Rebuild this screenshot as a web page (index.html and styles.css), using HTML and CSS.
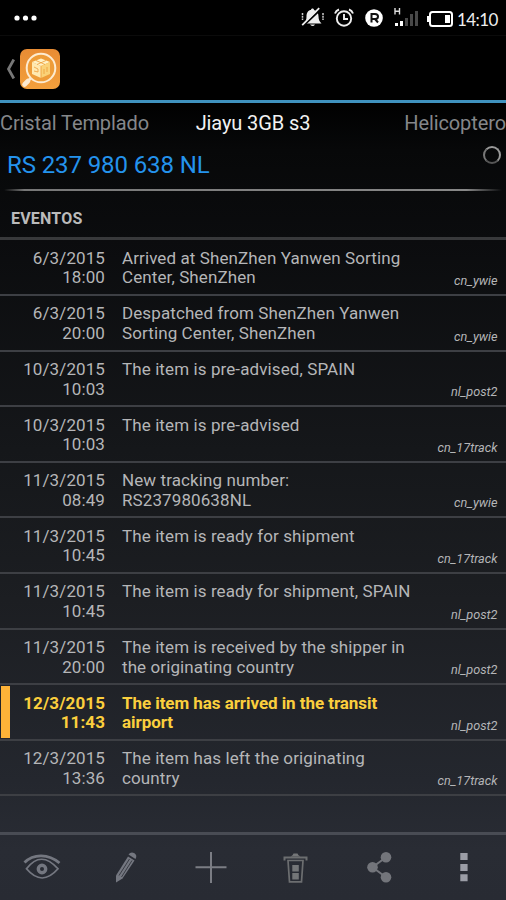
FILE: index.html
```html
<!DOCTYPE html>
<html lang="es">
<head>
<meta charset="utf-8">
<title>Eventos</title>
<link rel="stylesheet" href="styles.css">
</head>
<body>
<div class="phone">
  <header class="status">
    <svg class="dots" width="24" height="8" viewBox="0 0 24 8" fill="#fff"><circle cx="3" cy="4" r="2.600"/><circle cx="11.500" cy="4" r="2.600"/><circle cx="20" cy="4" r="2.600"/></svg>
    <div class="indicators">
      <svg width="153" height="27" viewBox="0 0 153 27">
        <g fill="#eee"><path d="M4 23.500c2-2 2.500-4 2.500-7 0-4 2-6.500 4.500-6.500 0-2 3-2 3 0 3 1 4.500 3 4.500 6.500 0 3 1 5 3 7z"/><path d="M10 24.500h5q-2 3-5 0z"/></g>
        <path d="M4 25 20 10" stroke="#000" stroke-width="2"/><path d="M3 26 20 9" stroke="#eee" stroke-width="1.800" transform="translate(-.8 -.8)"/>
        <path d="M2.500 13v7M23 13v7" fill="none" stroke="#ccc" stroke-width="1.500" stroke-dasharray="2 .7"/>
        <g fill="none" stroke="#eee" stroke-width="1.900"><circle cx="44" cy="18.500" r="7.200"/><path d="M44 14v5h4M35 13.500q1-3 4-4M49 9.500q3 1 4 4"/></g>
        <circle cx="74" cy="18" r="8.800" fill="#fff"/><path d="M71.500 22.500v-8.500h3.500q3 0 3 2.500t-3 2.500h-3.500M75 19l3 3.500" fill="none" stroke="#111" stroke-width="2"/>
        <path d="M95 8v6.500M99.500 8v6.500M95 11.200h4.500" stroke="#ddd" stroke-width="1.400"/>
        <g fill="#fff"><rect x="95" y="23" width="3" height="3"/><rect x="100" y="21" width="3" height="5"/></g>
        <g fill="#484848"><rect x="105" y="18" width="3" height="8"/><rect x="110" y="14" width="3" height="12"/><rect x="115" y="11" width="3" height="15"/></g>
        <rect x="130" y="12" width="22" height="14" rx="2.500" fill="none" stroke="#fff" stroke-width="2"/>
        <path d="M127 16h2v6h-2z" fill="#fff"/><rect x="145" y="15" width="5" height="8" fill="#fff"/>
      </svg>
      <span class="clock">14:10</span>
    </div>
  </header>
  <div class="appbar">
    <svg class="back" width="11" height="20" viewBox="0 0 11 20"><path d="M9.800.500 4.500 10l5.300 9.500" fill="none" stroke="#777" stroke-width="2.800"/></svg>
    <svg width="40" height="40" viewBox="0 0 40 40">
      <defs><linearGradient id="o" x1="0" y1="0" x2="0" y2="1"><stop offset="0" stop-color="#e88c34"/><stop offset="1" stop-color="#f3a03c"/></linearGradient></defs>
      <rect width="40" height="40" rx="7" fill="url(#o)"/>
      <circle cx="21" cy="19" r="14.300" fill="#ee9c38" stroke="#fdebd0" stroke-width="2"/>
      <path d="M10.500 29.500 8 32" stroke="#fdebd0" stroke-width="2.500"/><path d="M8 32 4.500 35.500" stroke="#fdebd0" stroke-width="4.600" stroke-linecap="round"/>
      <path d="m12 13 9-3.500 9 3.500-9 4z" fill="#fff2c5"/><path d="m12 13 9 4v12l-9-4z" fill="#ffe9b0"/><path d="m30 13-9 4v12l9-4z" fill="#fad277"/>
      <path d="M16 11.500l9 4M26 11.500l-9 4M14 18l4 2v3l-4-1M24 20v5M27 18v5M21 17v12" fill="none" stroke="#ed9c38" stroke-width=".8"/>
    </svg>
  </div>
  <nav class="tabs"><span class="prev">Cristal Templado</span><span class="cur">Jiayu 3GB s3</span><span class="next">Helicoptero</span></nav>
  <section class="number">
    <h1>RS 237 980 638 NL</h1>
    <i class="spinner"></i>
  </section>
  <h2>EVENTOS</h2>
  <main>
    <article><time>6/3/2015<br>18:00</time><p>Arrived at ShenZhen Yanwen Sorting<br>Center, ShenZhen</p><em>cn_ywie</em></article>
    <article><time>6/3/2015<br>20:00</time><p>Despatched from ShenZhen Yanwen<br>Sorting Center, ShenZhen</p><em>cn_ywie</em></article>
    <article><time>10/3/2015<br>10:03</time><p>The item is pre-advised, SPAIN</p><em>nl_post2</em></article>
    <article><time>10/3/2015<br>10:03</time><p>The item is pre-advised</p><em>cn_17track</em></article>
    <article><time>11/3/2015<br>08:49</time><p>New tracking number:<br>RS237980638NL</p><em>cn_ywie</em></article>
    <article><time>11/3/2015<br>10:45</time><p>The item is ready for shipment</p><em>cn_17track</em></article>
    <article><time>11/3/2015<br>10:45</time><p>The item is ready for shipment, SPAIN</p><em>nl_post2</em></article>
    <article><time>11/3/2015<br>20:00</time><p>The item is received by the shipper in<br>the originating country</p><em>nl_post2</em></article>
    <article class="active"><time>12/3/2015<br>11:43</time><p>The item has arrived in the transit<br>airport</p><em>nl_post2</em></article>
    <article><time>12/3/2015<br>13:36</time><p>The item has left the originating<br>country</p><em>cn_17track</em></article>
  </main>
  <footer>
    <svg viewBox="0 0 40 40"><g fill="none" stroke="#747780"><path d="M2.500 15.500C11 7 26 6 37.500 16" stroke-width="2.800"/><path d="M4.500 21.500Q19-1 36 21.500 20 43 4.500 21.500z" stroke-width="1.800" transform="translate(0 3.500) scale(1 .85)"/><circle cx="20" cy="22" r="3.700" stroke-width="3.400"/></g></svg>
    <svg viewBox="0 0 40 40"><g fill="#747780"><path d="M10 35.500V28.500L22 9.500l6.500 4-12 18z"/><path d="m22.500 7.500q2.500-3.500 6-1.200 3 2.200 1 5.700z"/></g><path d="m13 28.500 10.500-16.500M15.500 30 26 13.500" stroke="#292c34" stroke-width=".8"/></svg>
    <svg viewBox="0 0 40 40"><path d="M4.500 20.300h31M20 5v31" stroke="#7b7d84" stroke-width="2"/></svg>
    <svg viewBox="0 0 40 40"><g fill="none" stroke="#6c6e70"><path d="M9.500 13.500V10.500h22v3" stroke-width="2"/><path d="m13 13.500 1.500 21.300h12l1.500-21.300z" stroke-width="1.700"/></g><path d="M15.500 9.500q2.500-1 3-3h4q.5 2 3 3zM17.300 18h6.500v6.500h-6.500zM17.300 26h6.500v6.500h-6.500z" fill="#747678"/></svg>
    <svg viewBox="0 0 40 40"><g fill="#73757b"><circle cx="27" cy="10.200" r="5.300"/><circle cx="13.500" cy="20.200" r="5.300"/><circle cx="27" cy="30.200" r="5.300"/></g><path d="m27 10.200-13.500 10 13.500 10" fill="none" stroke="#73757b" stroke-width="2"/></svg>
    <svg viewBox="0 0 40 40"><path d="M16.300 6h7.300v7h-7.300zM16.300 17h7.300v7h-7.300zM16.300 27.300h7.300v7h-7.300z" fill="#9b9da6"/></svg>
  </footer>
</div>
</body>
</html>
```
FILE: styles.css
```css
* { box-sizing: border-box; }
body { margin: 0; background: #000; font-family: Roboto, "Liberation Sans", sans-serif; }
.phone { width: 506px; height: 900px; overflow: hidden; display: flex; flex-direction: column; color: #b5b6b8; background: linear-gradient(#000 0, #000 100px, #070809 150px, #0b0c0e 240px, #15171a 450px, #1c1e22 600px, #24272e 780px, #292c34 850px, #282b33 900px); }
svg { display: block; flex: none; }
.status { height: 36px; display: flex; justify-content: space-between; padding: 0 9px 0 14px; border-bottom: 1px solid #0b0b0b; }
.dots { margin-top: 14px; }
.indicators { display: flex; gap: 4px; }
.indicators svg { width: 153px; }
.clock { font: 17px/39px Lato, sans-serif; color: #eee; width: 40px; white-space: nowrap; letter-spacing: -.6px; }
.appbar { height: 67px; padding: 13px 0 0 4px; display: flex; gap: 5px; border-bottom: 3px solid #3f92bf; }
.back { margin-top: 10px; }
.tabs { height: 39px; display: grid; grid-template-columns: 1fr auto 1fr; font-size: 20px; line-height: 41px; letter-spacing: -.1px; color: #85878a; white-space: nowrap; }
.tabs .cur { color: #f2f2f2; }
.tabs .next { text-align: right; }
.number { height: 49px; display: flex; justify-content: space-between; padding: 0 5px 0 7px; border-bottom: 2px solid; border-image: linear-gradient(90deg, transparent 1%, #777 5%, #888 92%, transparent 99%) 1; }
h1 { margin: 0; font-size: 24px; line-height: 46px; letter-spacing: -.1px; font-weight: 400; color: #2493ed; white-space: nowrap; }
.spinner { width: 18px; height: 18px; margin-top: 4px; border-radius: 50%; border: 2px solid #999; border-left-color: #777; border-bottom-color: #555; }
h2 { margin: 0; height: 49px; flex: none; padding-left: 11px; font-size: 16px; line-height: 56px; letter-spacing: .2px; font-weight: 700; color: #bbb; border-bottom: 3px solid #38393b; }
main { padding-top: .4px; }
article { height: 55.600px; display: grid; grid-template-columns: 105px 1fr auto; column-gap: 17px; padding: 8.500px 8.500px 0 0; border-bottom: 2px solid #3d3f44; }
time, p { margin: 0; font-size: 17px; line-height: 19.500px; letter-spacing: .1px; white-space: nowrap; }
time { text-align: right; }
em { font-size: 12.700px; line-height: 16px; align-self: end; padding-bottom: 5px; }
.active { color: #fbcf3d; font-weight: 700; background: linear-gradient(#fdb338, #fdb338) 1px 1px / 9px 52px no-repeat; }
.active p { letter-spacing: -.06px; }
.active em { color: #b5b6b8; font-weight: 400; }
footer { margin-top: auto; height: 68px; flex: none; padding: 12px 0 0; border-top: 3px solid #494c54; display: grid; grid-template-columns: repeat(6, 1fr); justify-items: center; }
footer svg { width: 40px; height: 40px; }
```
